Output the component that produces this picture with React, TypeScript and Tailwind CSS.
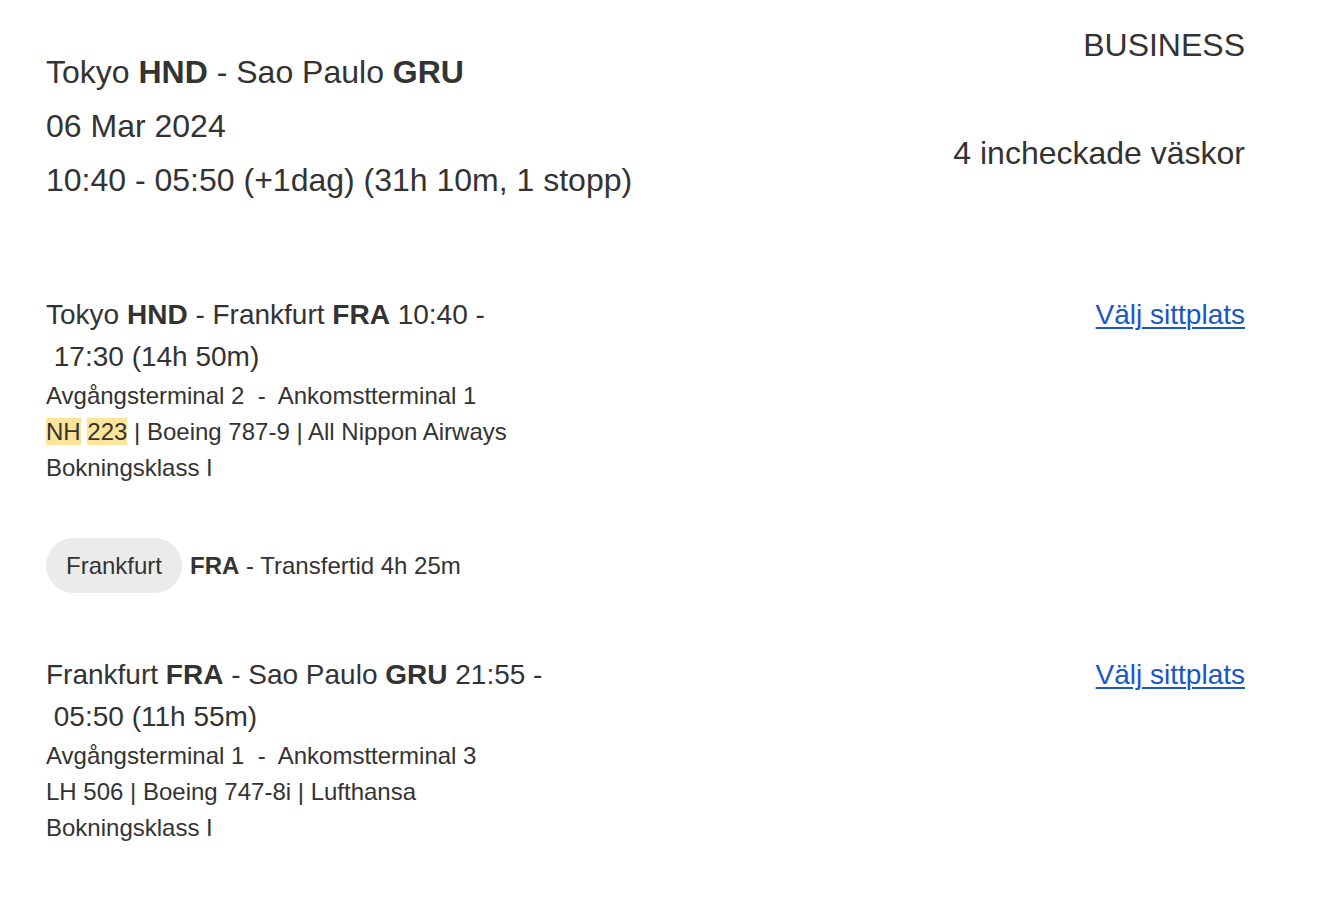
import React from "react";

const font = { fontFamily: '"Liberation Sans", Arial, sans-serif' };

function Segment({
  from,
  fromCode,
  to,
  toCode,
  dep,
  arr,
  dur,
  terminals,
  flight,
}: {
  from: string;
  fromCode: string;
  to: string;
  toCode: string;
  dep: string;
  arr: string;
  dur: string;
  terminals: string;
  flight: React.ReactNode;
}) {
  return (
    <div className="flex justify-between">
      <div>
        <div className="text-[28px] leading-[42px] whitespace-pre">
          {from} <b>{fromCode}</b> - {to} <b>{toCode}</b> {dep} -
        </div>
        <div className="text-[28px] leading-[42px] whitespace-pre">
          {" "}
          {arr} ({dur})
        </div>
        <div className="text-[24px] leading-[36px] whitespace-pre">{terminals}</div>
        <div className="text-[24px] leading-[36px] whitespace-pre">{flight}</div>
        <div className="text-[24px] leading-[36px]">Bokningsklass I</div>
      </div>
      <div>
        <a
          href="#"
          className="text-[28px] leading-[42px] text-[#1a56c8] underline underline-offset-[3px] decoration-[1.5px]"
        >
          Välj sittplats
        </a>
      </div>
    </div>
  );
}

export default function App() {
  return (
    <div
      className="w-[1320px] h-[908px] bg-white text-[#333333] pl-[46px] pr-[75px]"
      style={font}
    >
      <div className="flex justify-between">
        <div className="pt-[45px] text-[32px] leading-[54px]">
          <div>
            Tokyo <b>HND</b> - Sao Paulo <b>GRU</b>
          </div>
          <div>06 Mar 2024</div>
          <div>10:40 - 05:50 (+1dag) (31h 10m, 1 stopp)</div>
        </div>
        <div className="pt-[18px] text-[32px] leading-[54px] text-right">
          <div>BUSINESS</div>
          <div className="h-[54px]" />
          <div>4 incheckade väskor</div>
        </div>
      </div>

      <div className="mt-[87px]">
        <Segment
          from="Tokyo"
          fromCode="HND"
          to="Frankfurt"
          toCode="FRA"
          dep="10:40"
          arr="17:30"
          dur="14h 50m"
          terminals="Avgångsterminal 2  -  Ankomstterminal 1"
          flight={
            <>
              <span className="bg-[#fde49b]">NH</span>{" "}
              <span className="bg-[#fde49b]">223</span> | Boeing 787-9 | All Nippon Airways
            </>
          }
        />
      </div>

      <div className="mt-[52px] flex items-center text-[24px]">
        <div className="h-[55px] px-[20px] rounded-full bg-[#ebebeb] flex items-center">
          Frankfurt
        </div>
        <div className="ml-[8px]">
          <b>FRA</b> - Transfertid 4h 25m
        </div>
      </div>

      <div className="mt-[61px]">
        <Segment
          from="Frankfurt"
          fromCode="FRA"
          to="Sao Paulo"
          toCode="GRU"
          dep="21:55"
          arr="05:50"
          dur="11h 55m"
          terminals="Avgångsterminal 1  -  Ankomstterminal 3"
          flight={<>LH 506 | Boeing 747-8i | Lufthansa</>}
        />
      </div>
    </div>
  );
}
